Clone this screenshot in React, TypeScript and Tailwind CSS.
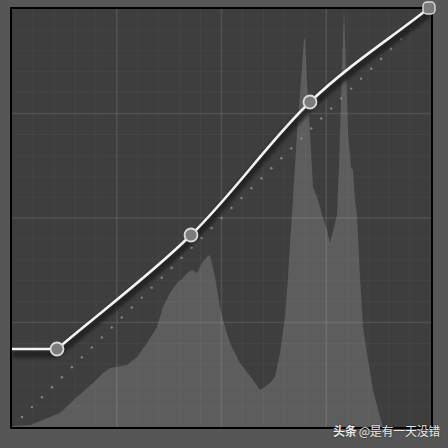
import React from 'react';

// histogram outline in image coordinates, baseline at y=427
const histogram: [number, number][] = [
  [12, 427], [13, 426], [30, 425], [45, 419], [60, 413], [77, 397], [93, 383], [103, 373],
  [110, 368], [127, 365], [137, 357], [147, 343], [157, 327], [163, 307], [170, 293],
  [177, 283], [182, 279], [187, 273], [192, 270], [197, 273], [202, 263], [207, 257], [210, 255],
  [215, 277], [220, 307], [223, 320], [230, 343], [240, 363], [253, 380], [260, 390],
  [270, 383], [275, 377], [280, 353], [285, 317], [288, 277], [290, 243], [292, 215],
  [297, 133], [302, 67], [304, 40], [305, 38], [307, 83], [310, 133], [313, 187],
  [317, 197], [320, 207], [322, 215], [327, 230], [330, 243], [335, 223], [337, 215],
  [339, 167], [342, 67], [344, 9], [346, 67], [348, 133], [351, 167], [353, 170],
  [355, 200], [357, 215], [360, 277], [363, 327], [368, 360], [373, 390], [380, 417],
  [383, 427],
];

const histPath = 'M' + histogram.map(([x, y]) => `${x},${y}`).join(' L') + ' Z';

const curvePath =
  'M12,349 L57,349 C101.7,311 148.8,276.2 191,235 C233.2,193.8 270.3,139.8 310,102 C349.7,64.2 389.3,39.3 429,8';

const X0 = 12;
const Y0 = 9;
const W = 419;
const H = 418;

function Grid() {
  const lines = [];
  for (let i = 1; i < 20; i++) {
    const major = i % 5 === 0;
    const x = X0 + (W * i) / 20;
    const y = Y0 + (H * i) / 20;
    const stroke = major ? 'rgba(255,255,255,0.1)' : 'rgba(255,255,255,0.035)';
    lines.push(<line key={'v' + i} x1={x} y1={Y0} x2={x} y2={Y0 + H} stroke={stroke} strokeWidth={major ? 1.5 : 1} />);
    lines.push(<line key={'h' + i} x1={X0} y1={y} x2={X0 + W} y2={y} stroke={stroke} strokeWidth={major ? 1.5 : 1} />);
  }
  return <g>{lines}</g>;
}

function Dots() {
  const dots = [];
  for (let i = 1; i < 42; i++) {
    const t = i / 42;
    dots.push(<circle key={i} cx={X0 + W * t} cy={Y0 + H - H * t} r={1.2} fill="#858585" />);
  }
  return <g>{dots}</g>;
}

const points: [number, number][] = [
  [57, 349],
  [191, 235],
  [310, 102],
];

export default function App() {
  return (
    <div className="relative w-[448px] h-[448px] bg-[#565656] pl-[10px] pt-[7px] font-['Noto_Sans_CJK_SC',sans-serif]">
      <div className="w-[423px] h-[422px] border-2 border-black bg-[#3e3e3e]">
        <svg width={W} height={H} viewBox={`${X0} ${Y0} ${W} ${H}`} className="block overflow-visible">
          <defs>
            <filter id="soft" x="-10%" y="-10%" width="120%" height="120%">
              <feGaussianBlur stdDeviation="1.8" />
            </filter>
          </defs>
          <path d={histPath} fill="#5d5d5d" />
          <Grid />
          <Dots />
          {/* curve shadow */}
          <path d={curvePath} fill="none" stroke="#222" strokeOpacity={0.85} strokeWidth={8} transform="translate(0,5)" filter="url(#soft)" />
          <path d={curvePath} fill="none" stroke="#f4f4f4" strokeWidth={2.6} strokeLinejoin="round" />
          {points.map(([x, y]) => (
            <circle key={x} cx={x} cy={y} r={6.5} fill="#7b7b7b" stroke="#dadada" strokeWidth={1.8} />
          ))}
          <rect x={423} y={2} width={12} height={12} rx={4} fill="#7b7b7b" stroke="#dadada" strokeWidth={1.4} />
        </svg>
      </div>
      <span className="absolute left-[333px] top-[423px] text-[12px] leading-[16px] text-white/90 tracking-tight [text-shadow:0_0_2px_rgba(0,0,0,0.6)]">
        <span className="font-bold">头条</span> @是有一天没错
      </span>
    </div>
  );
}
